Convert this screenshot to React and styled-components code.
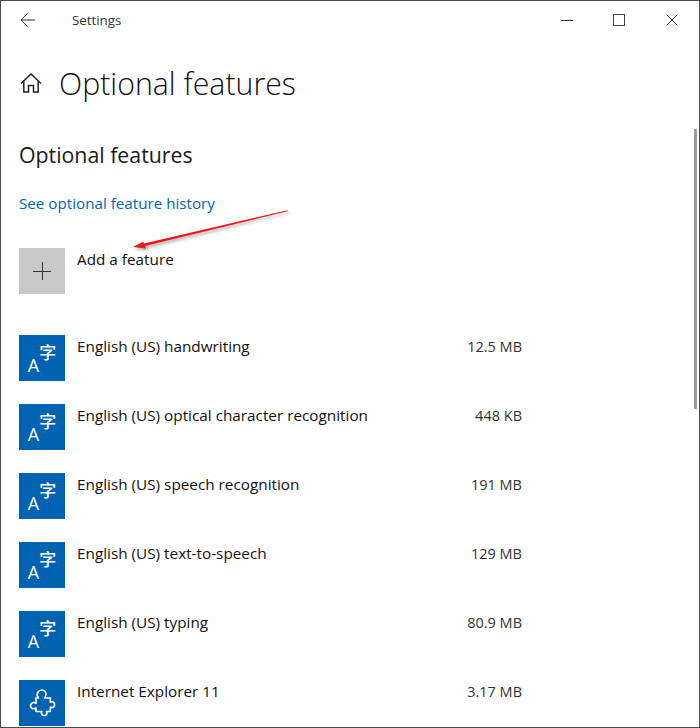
import React from 'react';
import styled, { createGlobalStyle } from 'styled-components';

const GlobalStyle = createGlobalStyle`
  html, body {
    margin: 0;
    padding: 0;
    background: #fff;
  }
  body {
    font-family: "Open Sans", "Noto Sans", "Liberation Sans", sans-serif;
    color: #111;
  }
`;

const features = [
  { name: 'English (US) handwriting', size: '12.5 MB', icon: 'lang' },
  { name: 'English (US) optical character recognition', size: '448 KB', icon: 'lang' },
  { name: 'English (US) speech recognition', size: '191 MB', icon: 'lang' },
  { name: 'English (US) text-to-speech', size: '129 MB', icon: 'lang' },
  { name: 'English (US) typing', size: '80.9 MB', icon: 'lang' },
  { name: 'Internet Explorer 11', size: '3.17 MB', icon: 'puzzle' },
];

function App() {
  return (
    <>
      <GlobalStyle />
      <Window>
        <TitleBar>
          <BackButton>
            <svg width="16" height="14" viewBox="0 0 16 14" fill="none" stroke="#333" strokeWidth="1">
              <path d="M1 7h14M7.5 .7 1 7l6.500 6.300" />
            </svg>
          </BackButton>
          <WindowTitle>Settings</WindowTitle>
          <WindowControls>
            <ControlButton>
              <svg width="12" height="12" viewBox="0 0 12 12" fill="none" stroke="#333">
                <path d="M0 6.500h12" />
              </svg>
            </ControlButton>
            <ControlButton>
              <svg width="12" height="12" viewBox="0 0 12 12" fill="none" stroke="#444">
                <rect x=".5" y=".5" width="11" height="11" />
              </svg>
            </ControlButton>
            <ControlButton>
              <svg width="12" height="12" viewBox="0 0 12 12" fill="none" stroke="#444">
                <path d="M.5 .5l11 11M11.500 .5l-11 11" />
              </svg>
            </ControlButton>
          </WindowControls>
        </TitleBar>

        <PageHeader>
          <svg width="22" height="20" viewBox="0 0 22 20" fill="none" stroke="#222" strokeWidth="1.500">
            <path d="M1 10.500 11 1l10 9.500M3.800 8v11h4.700v-6.500h5V19h4.700V8" />
          </svg>
          <PageTitle>Optional features</PageTitle>
        </PageHeader>

        <Content>
          <SectionTitle>Optional features</SectionTitle>
          <HistoryLink href="#">See optional feature history</HistoryLink>

          <AddRow>
            <AddTile>
              <svg width="18" height="18" viewBox="0 0 18 18" stroke="#333" strokeWidth="1" shapeRendering="crispEdges">
                <path d="M9.500 0v18M0 9.500h18" />
              </svg>
            </AddTile>
            <RowName>Add a feature</RowName>
          </AddRow>

          <FeatureList>
            {features.map((f) => (
              <FeatureRow key={f.name}>
                <FeatureTile>
                  {f.icon === 'lang' ? (
                    <LangGlyph>
                      <LatinChar>A</LatinChar>
                      <HanChar>字</HanChar>
                    </LangGlyph>
                  ) : (
                    <svg width="46" height="46" viewBox="0 0 46 46" fill="none" stroke="#fff" strokeWidth="1.600" strokeLinejoin="round">
                      <path d="M17 18h2.500c-1.500-1.500-1.800-3.500-.8-5.500 1-1.800 3.500-3 5.500-2.300 2.200.8 3.300 3.300 2.600 5.300-.3.9-.6 1.600-1.100 2.500h5.600v4.200c1.500-.8 3-.5 3.800.8.900 1.500.5 3.500-1 4.300-.9.5-1.900.4-2.800-.1v4.300h-3.800c.8 1.300.5 3-.9 3.700-1.500.8-3.400.2-4-1.300-.4-.9-.2-1.700.2-2.400h-5.800V28c-1.500.9-3 1-4.300 0-1.300-1.100-1.500-3-.5-4.300 1.100-1.400 3-1.500 4.800-.3z" />
                    </svg>
                  )}
                </FeatureTile>
                <RowName>{f.name}</RowName>
                <RowSize>{f.size}</RowSize>
              </FeatureRow>
            ))}
          </FeatureList>
        </Content>

        <ScrollThumb />

        <Annotation width="170" height="50" viewBox="0 0 170 50">
          <path d="M1 40 11 34.700 12 36.600 155.500 3.200v1L13 39l1 2.500z" fill="#f0141c" />
        </Annotation>
      </Window>
    </>
  );
}

export default App;

const Window = styled.div`
  position: relative;
  box-sizing: border-box;
  width: 700px;
  height: 728px;
  overflow: hidden;
  background: #fff;
  border: 1px solid #4a4a4a;
`;

const TitleBar = styled.div`
  display: flex;
  align-items: center;
  height: 37px;
`;

const BackButton = styled.div`
  display: flex;
  justify-content: center;
  width: 54px;
`;

const WindowTitle = styled.div`
  margin-left: 17px;
  font-size: 13.300px;
  color: #333;
`;

const WindowControls = styled.div`
  display: flex;
  margin-left: auto;
  margin-right: 1px;
`;

const ControlButton = styled.div`
  display: flex;
  align-items: center;
  justify-content: center;
  width: 52.500px;
  height: 37px;
`;

const PageHeader = styled.div`
  display: flex;
  align-items: center;
  gap: 17px;
  height: 44px;
  margin-top: 23px;
  padding-left: 19px;
`;

const PageTitle = styled.h1`
  margin: 0;
  font-size: 30.300px;
  font-weight: 300;
  color: #111;
`;

const Content = styled.div`
  display: flex;
  flex-direction: column;
  padding: 0 0 0 18px;
`;

const SectionTitle = styled.h2`
  margin: 36px 0 0;
  font-size: 21.300px;
  line-height: 28px;
  font-weight: 400;
  color: #1a1a1a;
`;

const HistoryLink = styled.a`
  margin-top: 24px;
  font-size: 15.200px;
  line-height: 20px;
  color: #0067b8;
  text-decoration: none;
`;

const AddRow = styled.div`
  display: flex;
  gap: 12px;
  margin-top: 35px;
`;

const AddTile = styled.div`
  display: flex;
  align-items: center;
  justify-content: center;
  width: 46px;
  height: 46px;
  background: #c8c8c8;
`;

const RowName = styled.div`
  flex: 1;
  margin-top: 1px;
  font-size: 15.300px;
  line-height: 20px;
  color: #111;
`;

const RowSize = styled.div`
  margin-top: 2px;
  font-size: 14.500px;
  line-height: 20px;
  color: #333;
  text-align: right;
`;

const FeatureList = styled.div`
  display: flex;
  flex-direction: column;
  gap: 23px;
  margin-top: 41px;
  padding-right: 177px;
`;

const FeatureRow = styled.div`
  display: flex;
  gap: 12px;
`;

const FeatureTile = styled.div`
  display: flex;
  align-items: center;
  justify-content: center;
  flex: none;
  width: 46px;
  height: 46px;
  background: #0063b1;
`;

const LangGlyph = styled.div`
  display: flex;
  align-items: flex-start;
  color: #fff;
`;

const LatinChar = styled.span`
  margin-top: 13px;
  font-size: 18px;
  line-height: 14px;
`;

const HanChar = styled.span`
  font-family: "Noto Sans CJK SC", sans-serif;
  font-size: 17px;
  line-height: 14px;
  font-weight: 500;
`;

const ScrollThumb = styled.div`
  position: absolute;
  top: 128px;
  right: 2px;
  width: 3px;
  height: 280px;
  background: #999;
`;

const Annotation = styled.svg`
  position: absolute;
  left: 131px;
  top: 206px;
  filter: drop-shadow(2px 2px 1.500px rgba(0, 0, 0, 0.35));
`;
